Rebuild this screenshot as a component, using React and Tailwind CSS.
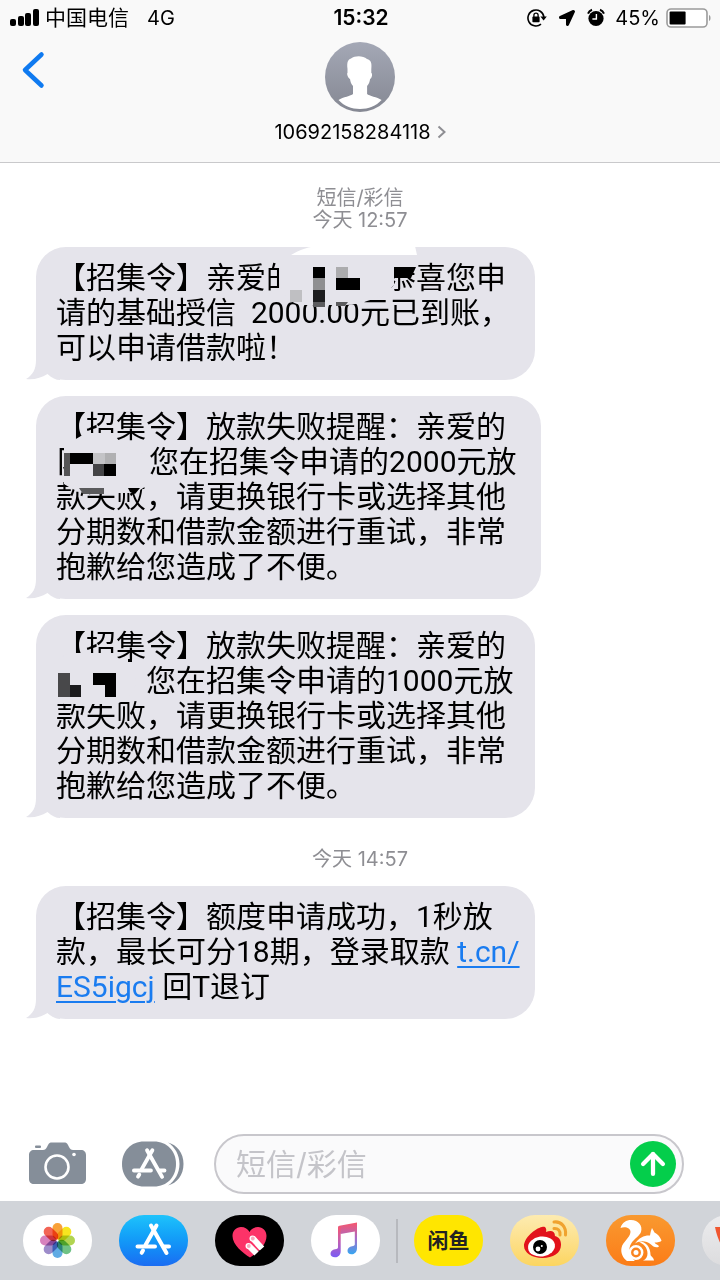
import React, { useState } from 'react';
import { ArrowUp } from 'lucide-react';
import { FaLocationArrow } from 'react-icons/fa';

const SignalIcon = () => (
  <svg width="29" height="20" viewBox="0 0 29 20" aria-hidden="true">
    <rect x="0" y="11" width="6" height="7" rx="2" />
    <rect x="8" y="8" width="6" height="10" rx="2" />
    <rect x="15" y="5" width="6" height="13" rx="2" />
    <rect x="23" y="1" width="6" height="17" rx="2" />
  </svg>
);

const RotationLockIcon = () => (
  <svg width="20" height="20" viewBox="0 0 20 20" fill="none" stroke="black" aria-hidden="true">
    <path d="M14 16.2A8 8 0 1 1 16.9 9" strokeWidth="1.6" />
    <path d="M13.4 8.6h6.4l-3.2 4z" fill="black" stroke="none" />
    <rect x="5.4" y="8.6" width="7.2" height="5.6" rx="0.8" fill="black" stroke="none" />
    <path d="M6.9 9V7.2a2.1 2.1 0 0 1 4.2 0V9" strokeWidth="1.3" />
  </svg>
);

const AlarmIcon = () => (
  <svg width="18" height="20" viewBox="0 0 18 20" aria-hidden="true">
    <circle cx="9" cy="10.5" r="7.6" />
    <path d="M1 5.6A7 7 0 0 1 5 1.8M17 5.6A7 7 0 0 0 13 1.8" stroke="black" strokeWidth="2" fill="none" />
    <path d="M9.4 6v5H5.4" stroke="white" strokeWidth="1.4" fill="none" />
  </svg>
);

const BatteryIcon = () => (
  <svg width="46" height="20" viewBox="0 0 46 20" aria-hidden="true">
    <rect x="1" y="1" width="40" height="18" rx="4" fill="white" stroke="#9b9b9b" strokeWidth="1.6" />
    <rect x="3.6" y="3.6" width="16" height="12.8" rx="1" />
    <path d="M43 7c2 .6 2 5.400 0 6z" fill="#9b9b9b" />
  </svg>
);

const AvatarIcon = () => (
  <svg width="70" height="70" viewBox="0 0 70 70" aria-hidden="true">
    <defs>
      <linearGradient id="avatar" x1="0" y1="0" x2="0" y2="1">
        <stop offset="0" stopColor="#a4a8b6" />
        <stop offset="1" stopColor="#858893" />
      </linearGradient>
    </defs>
    <circle cx="35" cy="35" r="35" fill="url(#avatar)" />
    <path
      d="M22.500 27c-.8-7 .5-9.500 3.500-10.500 4-3 12-3 16 .5 4 1 5 4 4.300 10v4c1.400 0 .8 5-1.200 6-.4 3-1.300 5-3 7v8c2 2 10 3 14.500 6C51 64 43.500 67 35 67S19 64 13.500 58c4.500-3 12.500-4 14.500-6v-8c-1.700-2-2.600-4-3-7-2-1-3.600-6-2.500-6z"
      fill="white"
    />
  </svg>
);

const CameraIcon = () => (
  <svg width="58" height="44" viewBox="0 0 58 44" aria-hidden="true">
    <path
      d="M5 8h9c2 0 3-1 4-3l1-2c1-2 2-2.500 4-2.500h12c2 0 3 .5 4 2.500l1 2c1 2 2 3 4 3h8c3 0 5 2 5 5v24c0 3-2 5-5 5H5c-3 0-5-2-5-5V13c0-3 2-5 5-5z"
      fill="#858e99"
    />
    <rect x="6" y="3.500" width="6" height="2.500" rx="1" fill="#858e99" />
    <circle cx="28" cy="25" r="11.500" fill="none" stroke="white" strokeWidth="2.600" />
    <circle cx="45" cy="12.500" r="1.800" fill="white" />
  </svg>
);

const StoreGlyph = () => (
  <g stroke="white" strokeWidth="4" strokeLinecap="round" fill="none">
    <path d="M32 10.500 47.500 38" />
    <path d="M37.500 10.500 26.500 30" />
    <path d="M24 35.500 22.700 37.800" />
    <path d="M18.500 31.500H36M45 31.500H50" />
  </g>
);

const StoreIcon = () => (
  <svg width="62" height="46" viewBox="0 0 62 46" aria-hidden="true">
    <path d="M22 .5h10C45 .5 54 10 54 23s-9 22.500-22 22.500H22C9 45.500 0 36 0 23S9 .5 22 .5z" fill="#858e99" />
    <path d="M46 1.500C55 4 61.500 12 61.500 23S55 42 46 44.500C53 40 57.500 32 57.500 23S53 6 46 1.500z" fill="#858e99" />
    <g transform="translate(-6 -1) scale(0.97)">
      <StoreGlyph />
    </g>
  </svg>
);

const petals = ['#f7941d', '#f5e100', '#a6ce39', '#5bb974', '#4a9fe0', '#8f7cc3', '#d26fb4', '#f04e3e'];

const PhotosLogo = () => (
  <svg className="h-full w-full" viewBox="0 0 69 51" aria-hidden="true">
    <g style={{ isolation: 'isolate' }}>
      {petals.map((color, i) => (
        <rect
          key={color}
          x="29.500"
          y="8"
          width="10"
          height="16.500"
          rx="5"
          fill={color}
          fillOpacity="0.880"
          transform={`rotate(${i * 45} 34.500 25.500)`}
          className="mix-blend-multiply"
        />
      ))}
    </g>
  </svg>
);

const AppStoreLogo = () => (
  <svg className="h-full w-full" viewBox="0 0 69 51" aria-hidden="true">
    <StoreGlyph />
  </svg>
);

const HeartLogo = () => (
  <svg className="h-full w-full" viewBox="0 0 69 51" aria-hidden="true">
    <path d="M35 42.500C28 38 17.500 30 17.500 21c0-5.500 4-9 8.500-9 4 0 7 2 8.500 5 1.500-3 4.500-5 8.500-5 4.500 0 8.500 3.500 8.500 9 0 9-9 17-16.500 21.500z" fill="#fc3368" />
    <g stroke="white" strokeWidth="6">
      <path d="M37.500 23 47 33.500" />
      <path d="M33.500 30.500 41.500 38.500" />
    </g>
    <circle cx="37.500" cy="23.500" r="3" fill="white" />
    <circle cx="33.500" cy="31" r="3" fill="white" />
    <circle cx="37.800" cy="23.500" r="1.900" fill="#f8a9be" />
    <circle cx="33.800" cy="31" r="1.900" fill="#f8a9be" />
  </svg>
);

const MusicLogo = () => (
  <svg className="h-full w-full" viewBox="0 0 69 51" aria-hidden="true">
    <defs>
      <linearGradient id="note" x1="0" y1="0" x2="0" y2="1">
        <stop offset="0" stopColor="#f8566c" />
        <stop offset="0.500" stopColor="#c05fb4" />
        <stop offset="1" stopColor="#7a5cf5" />
      </linearGradient>
      <linearGradient id="noteRight" x1="0" y1="0" x2="0" y2="1">
        <stop offset="0" stopColor="#f8566c" />
        <stop offset="0.500" stopColor="#a76bc8" />
        <stop offset="1" stopColor="#35a7f2" />
      </linearGradient>
    </defs>
    <path d="M27 12.500c0-1 .6-1.500 1.500-1.700L46 7.500V33c0 4-2.500 6.300-5.500 6.300-2.500 0-4-1.600-4-3.600 0-2.700 2-4 4.500-4.500 2-.4 2.800-.7 2.800-2V16.500L29.500 19z" fill="url(#noteRight)" />
    <path d="M27 12.500 29.700 11V36c0 4-2.500 6.300-5.700 6.300-2.800 0-4.500-1.500-4.500-3.600 0-2.500 2-4 4.500-4.500s3-.8 3-2z" fill="url(#note)" />
  </svg>
);

const WeiboLogo = () => (
  <svg className="h-full w-full" viewBox="0 0 69 51" aria-hidden="true">
    <path d="M32 12c3-1 5 1 4 5 5-2 9-1 9 4 4 1 6 4 6 9 0 8-8 13-18.500 13S14 37.500 14 31c0-8 11-17.500 18-19z" fill="#e2121b" />
    <ellipse cx="31.500" cy="31.500" rx="13.500" ry="10" fill="white" transform="rotate(-8 31.500 31.500)" />
    <circle cx="30" cy="32" r="7" fill="black" />
    <circle cx="28" cy="34" r="2.400" fill="white" />
    <circle cx="31.800" cy="31" r="1" fill="white" />
    <g fill="none" stroke="#f0a32f" strokeWidth="3" strokeLinecap="round">
      <path d="M44 7c7-1 12.500 5 11.500 13" />
      <path d="M44 13.500c4-.5 6.500 2.500 6 6.500" />
    </g>
  </svg>
);

const SquirrelLogo = () => (
  <svg className="h-full w-full" viewBox="0 0 69 51" aria-hidden="true">
    <g fill="white">
      <path d="M14.500 13C16 7.500 20.500 5 25 5c7.500 0 12 6 10 12-1.500 4-7 7-9.500 11-4 6-2 14 3.500 18h-8c-4-3-6.500-8-5.500-13 1-6 8.500-10 9-16 .2-4-5.500-6-10-4z" />
      <path d="M46 13l2.500 4.500c3.500 1.500 5.500 4.500 7 8-.5 1.500-4 2-7 2 1 2 4 2 4.500 4-3 2-6 0-8-2-5-4-11-4-16-1 4-6 10-8.500 15-8 .5-3 1-5 2-7.500z" />
      <path d="M32 26.500c7-1 12.500 5 12.500 13 0 2 3 2.500 3.500 6H37c3-1 4.500-4 4.500-7 0-6-4-10-9.500-12z" />
    </g>
    <circle cx="30" cy="37.500" r="6.200" fill="#f98420" stroke="white" strokeWidth="2.500" />
    <circle cx="30" cy="37.500" r="2.500" fill="white" />
  </svg>
);

const MoreLogo = () => (
  <svg className="h-full w-full" viewBox="0 0 69 51" aria-hidden="true">
    <path d="M13 12h9l8 26h-5C19 32 15 22 13 12z" fill="#f0562f" />
  </svg>
);

const BubbleTail = () => (
  <svg className="absolute bottom-0 -left-2.5" width="34" height="30" viewBox="0 0 34 30" aria-hidden="true">
    <path d="M10 0v10c0 9-3 15-10 19 8 1 15-1 21.500-5C26 28 30 30 34 30V0z" fill="#e5e4eb" />
  </svg>
);

// Pixelated masks over the recipient's name
const FirstMask = () => (
  <svg className="absolute top-0 left-0 overflow-visible" width="390" height="64" viewBox="0 0 390 64" aria-hidden="true">
    <path d="M243 7h138v13h-23v18c-8 10-28 19-48 20h-46c-14-4-21-14-21-28z" fill="#e5e4eb" />
    <path d="M255 8c8-5 18-9 30-9h94l2 9z" fill="white" />
    <path d="M277 20h12v11h-12zM300 31h24v12h-24zM358 20h22l-5 11h-17z" fill="black" />
    <path d="M302 31l10-4v4z" fill="black" />
    <rect x="277" y="31" width="12" height="12" fill="#8f8f91" />
    <rect x="277" y="43" width="12" height="12" fill="#1d1d1f" />
    <path d="M277 55h12v5h-12zM300 55h12l-3 4h-9z" fill="#5c5c5e" />
    <rect x="300" y="20" width="12" height="11" fill="#acacae" />
    <rect x="254" y="43" width="12" height="12" fill="#bfbfc2" />
  </svg>
);

const SecondMask = () => (
  <svg className="absolute top-0 left-0" width="120" height="104" viewBox="0 0 120 104" aria-hidden="true">
    <path d="M28 50 50 37h28v8l34 15v28c-6 6-12 8-18 9H48c-8-2-14-5-20-9z" fill="#e5e4eb" />
    <rect x="28" y="57" width="6" height="23" fill="#555557" />
    <path d="M34 57h23v11H34zM68 68h12v12H68zM92 92h12l-5 6-5-2z" fill="black" />
    <rect x="57" y="57" width="12" height="11" fill="#c3c3c6" />
    <rect x="69" y="57" width="11" height="11" fill="#b0b0b2" />
    <rect x="57" y="68" width="11" height="12" fill="#444446" />
    <path d="M43 92h25v6H47z" fill="#5a5a5c" />
  </svg>
);

const ThirdMask = () => (
  <svg className="absolute top-0 left-0" width="120" height="104" viewBox="0 0 120 104" aria-hidden="true">
    <path d="M34 38h44l4 5c12 4 18 10 18 20 0 14-8 22-20 26H28c-9-3-16-12-16-22 0-14 10-25 22-29z" fill="#e5e4eb" />
    <rect x="22" y="58" width="12" height="24" fill="#48484a" />
    <rect x="34" y="70" width="11" height="12" fill="#1b1b1d" />
    <path d="M57 58h23v24H69V70H57zM92 44h4v3h-4z" fill="black" />
  </svg>
);

const messages = [
  {
    id: 1,
    lines: ['【招集令】亲爱的　　　恭喜您申', '请的基础授信  2000.00元已到账，', '可以申请借款啦！'],
    mask: <FirstMask />,
  },
  {
    id: 2,
    wide: true,
    lines: [
      '【招集令】放款失败提醒：亲爱的',
      '阝　　\u200a您在招集令申请的2000元放',
      '款失败，请更换银行卡或选择其他',
      '分期数和借款金额进行重试，非常',
      '抱歉给您造成了不便。',
    ],
    mask: <SecondMask />,
  },
  {
    id: 3,
    lines: [
      '【招集令】放款失败提醒：亲爱的',
      '　　　您在招集令申请的1000元放',
      '款失败，请更换银行卡或选择其他',
      '分期数和借款金额进行重试，非常',
      '抱歉给您造成了不便。',
    ],
    mask: <ThirdMask />,
  },
];

const apps = [
  { name: '照片', style: 'bg-white', logo: <PhotosLogo /> },
  { name: 'App Store', style: 'bg-linear-to-b from-[#1fc3fb] to-[#1b6cf2]', logo: <AppStoreLogo /> },
  { name: 'Digital Touch', style: 'bg-black', logo: <HeartLogo /> },
  { name: '音乐', style: 'bg-white', logo: <MusicLogo /> },
];

const moreApps = [
  { name: '闲鱼', style: 'bg-[#ffe600]', logo: <span className="text-[21px] font-bold text-[#222]">闲鱼</span> },
  { name: '微博', style: 'bg-linear-to-b from-[#fdebb0] to-[#fcd55f]', logo: <WeiboLogo /> },
  { name: 'UC', style: 'bg-linear-to-b from-[#f9992f] to-[#fb7c17]', logo: <SquirrelLogo /> },
  { name: '更多', style: 'bg-linear-to-b from-[#ececee] to-[#dcdcde]', logo: <MoreLogo /> },
];

const Bubble = ({ wide, mask, children }) => (
  <div
    className={`relative rounded-[30px] bg-[#e5e4eb] pt-[13px] pb-[15px] pl-5 font-['Roboto','Noto_Sans_CJK_SC',sans-serif] text-[30px] leading-[35px] whitespace-pre text-black ${
      wide ? 'w-[78%]' : 'w-[77%]'
    }`}
  >
    <BubbleTail />
    <div className="relative">{children}</div>
    {mask}
  </div>
);

const AppButton = ({ app }) => (
  <button
    type="button"
    aria-label={app.name}
    className={`flex h-[51px] w-[69px] shrink-0 items-center justify-center rounded-[25px] ${app.style}`}
  >
    {app.logo}
  </button>
);

const App = () => {
  const [draft, setDraft] = useState('');

  return (
    <div className="flex min-h-screen flex-col overflow-hidden bg-white font-['Inter','Noto_Sans_CJK_SC',sans-serif] text-black">
      <header className="border-b border-[#c9c9cb] bg-[#f9f9f9]">
        {/* Status bar */}
        <div className="grid h-9 grid-cols-[1fr_auto_1fr] items-center pr-2 pl-2.5 text-[21px] leading-6">
          <div className="flex items-center">
            <SignalIcon />
            <span className="ml-1.5">中国电信</span>
            <span className="ml-[18px] text-[20px]">4G</span>
          </div>
          <span className="font-semibold">15:32</span>
          <div className="flex items-center justify-end">
            <RotationLockIcon />
            <FaLocationArrow className="ml-3 h-4 w-4" />
            <span className="ml-3">
              <AlarmIcon />
            </span>
            <span className="mr-1.5 ml-2.5 text-[20px]">45%</span>
            <BatteryIcon />
          </div>
        </div>

        {/* Contact */}
        <div className="grid grid-cols-[1fr_auto_1fr] items-start pt-1.5 pb-[18px]">
          <button type="button" aria-label="返回" className="ml-5 w-7 pt-2">
            <svg width="26" height="40" viewBox="0 0 26 40" fill="none" aria-hidden="true">
              <path d="M21.500 4.500 5 20l16.500 15.500" stroke="#0f7af0" strokeWidth="4.500" strokeLinecap="round" strokeLinejoin="round" />
            </svg>
          </button>
          <button type="button" className="flex flex-col items-center gap-2">
            <AvatarIcon />
            <span className="flex items-center gap-1.5 text-[20px] leading-6">
              10692158284118
              <svg width="9" height="14" viewBox="0 0 9 14" fill="none" aria-hidden="true">
                <path d="M1.500 1.500 7.500 7l-6 5.500" stroke="#8e8e93" strokeWidth="2" />
              </svg>
            </span>
          </button>
        </div>
      </header>

      <main className="flex flex-1 flex-col gap-4 px-9 pt-6">
        <p className="text-center text-[20px] leading-[22px] text-[#8e8e93]">
          短信/彩信
          <br />
          今天 12:57
        </p>

        {messages.map((message) => (
          <Bubble key={message.id} wide={message.wide} mask={message.mask}>
            {message.lines.map((line) => (
              <p key={line}>{line}</p>
            ))}
          </Bubble>
        ))}

        <p className="mt-3.5 text-center text-[20px] leading-[22px] text-[#8e8e93]">今天 14:57</p>

        <Bubble>
          <p>【招集令】额度申请成功，1秒放</p>
          <p>
            款，最长可分18期，登录取款{' '}
            <a href="#link" className="text-[#1a7cf0] underline decoration-2 underline-offset-4">
              t.cn/
            </a>
          </p>
          <p>
            <a href="#link" className="text-[#1a7cf0] underline decoration-2 underline-offset-4">
              ES5igcj
            </a>{' '}
            回T退订
          </p>
        </Bubble>
      </main>

      <footer>
        {/* Compose bar */}
        <div className="flex items-center pr-9 pb-[7px] pl-[29px]">
          <button type="button" aria-label="相机" className="shrink-0">
            <CameraIcon />
          </button>
          <button type="button" aria-label="App" className="ml-[35px] shrink-0">
            <StoreIcon />
          </button>
          <div className="ml-[30px] flex h-[60px] min-w-0 flex-1 items-center rounded-full border-2 border-[#c8c7cc] bg-[#fafafb] pr-1.5 pl-5">
            <input
              type="text"
              aria-label="短信/彩信"
              placeholder="短信/彩信"
              value={draft}
              onChange={(e) => setDraft(e.target.value)}
              className="min-w-0 flex-1 bg-transparent text-[30px] leading-9 outline-none placeholder:text-[#c4c4c9]"
            />
            <button
              type="button"
              aria-label="发送"
              className="flex h-[46px] w-[46px] shrink-0 items-center justify-center rounded-full bg-[#04ce4b] text-white"
            >
              <ArrowUp size={34} strokeWidth={3} />
            </button>
          </div>
        </div>

        {/* App drawer */}
        <nav className="flex h-[79px] items-start gap-[27px] overflow-hidden bg-[#d1d4d9] pt-3.5 pl-[23px]">
          {apps.map((app) => (
            <AppButton key={app.name} app={app} />
          ))}
          <div className="-mx-[11px] mt-1 h-11 w-0.5 shrink-0 bg-[#b7b9be]" />
          {moreApps.map((app) => (
            <AppButton key={app.name} app={app} />
          ))}
        </nav>
      </footer>
    </div>
  );
};

export default App;
